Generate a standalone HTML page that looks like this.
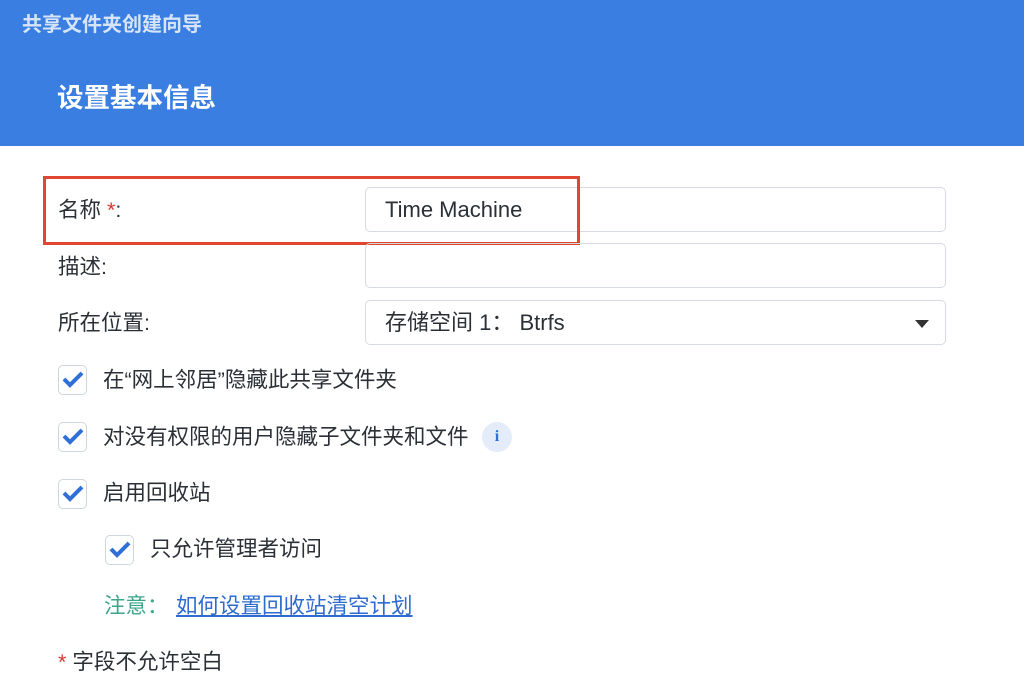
<!DOCTYPE html><html><head><meta charset="utf-8"><style>
body{margin:0;width:1024px;height:697px;background:#fff;position:relative;overflow:hidden;font-family:"Liberation Sans","Noto Sans CJK SC",sans-serif;color:#2b2f36}
.hd{position:absolute;left:0;top:0;width:1024px;height:146px;background:#3a7ee2}
.t1{position:absolute;left:22px;top:8px;font-size:20px;color:#d6e4f8;font-weight:bold}
.t2{position:absolute;left:57px;top:76px;font-size:26.5px;color:#fff;font-weight:bold}
.lbl{position:absolute;left:58px;font-size:21.5px;line-height:24px}
.in{position:absolute;left:365px;border:1px solid #d6dbe2;border-radius:5px;font-size:22px;line-height:43px;padding-left:19px;box-sizing:border-box;width:581px;height:45px}
.red{position:absolute;left:43px;top:176px;width:537px;height:69px;border:3px solid #e0472e;box-sizing:border-box}
.cb{position:absolute;width:29px;height:30px;border:1px solid #cfd5dd;border-radius:5px;box-sizing:border-box;background:#fff}
.cb svg{position:absolute;left:3px;top:5px}
.tx{position:absolute;font-size:21.5px;line-height:24px}
</style></head><body>
<div class="hd"><div class="t1">共享文件夹创建向导</div><div class="t2">设置基本信息</div></div>
<div class="lbl" style="top:198px">名称 <span style="color:#d9382c">*</span>:</div>
<div class="in" style="top:187px">Time Machine</div>
<div class="red"></div>
<div class="lbl" style="top:255px">描述:</div>
<div class="in" style="top:243px"></div>
<div class="lbl" style="top:311px">所在位置:</div>
<div class="in" style="top:300px">存储空间 1：&nbsp;Btrfs<svg style="position:absolute;right:16px;top:19px" width="14" height="8"><path d="M0 0H14L7 8Z" fill="#333"/></svg></div>
<div class="cb" style="left:58px;top:365px"><svg width="22" height="18"><path d="M2 8L8 14L20 2" stroke="#2f6fd6" stroke-width="4" fill="none"/></svg></div>
<div class="tx" style="left:103px;top:368px">在“网上邻居”隐藏此共享文件夹</div>
<div class="cb" style="left:58px;top:422px"><svg width="22" height="18"><path d="M2 8L8 14L20 2" stroke="#2f6fd6" stroke-width="4" fill="none"/></svg></div>
<div class="tx" style="left:103px;top:425px">对没有权限的用户隐藏子文件夹和文件</div>
<div style="position:absolute;left:482px;top:422px;width:30px;height:30px;border-radius:50%;background:#e3ecf8;color:#2f6fd6;font-weight:bold;font-size:16px;text-align:center;line-height:30px;font-family:'Liberation Serif',serif">i</div>
<div class="cb" style="left:58px;top:479px"><svg width="22" height="18"><path d="M2 8L8 14L20 2" stroke="#2f6fd6" stroke-width="4" fill="none"/></svg></div>
<div class="tx" style="left:103px;top:481px">启用回收站</div>
<div class="cb" style="left:105px;top:535px"><svg width="22" height="18"><path d="M2 8L8 14L20 2" stroke="#2f6fd6" stroke-width="4" fill="none"/></svg></div>
<div class="tx" style="left:150px;top:537px">只允许管理者访问</div>
<div class="tx" style="left:104px;top:594px;color:#3aa58a">注意：</div>
<div class="tx" style="left:176px;top:594px;color:#2d6bd0;text-decoration:underline">如何设置回收站清空计划</div>
<div class="tx" style="left:58px;top:650px"><span style="color:#d9382c">*</span> 字段不允许空白</div>
</body></html>
